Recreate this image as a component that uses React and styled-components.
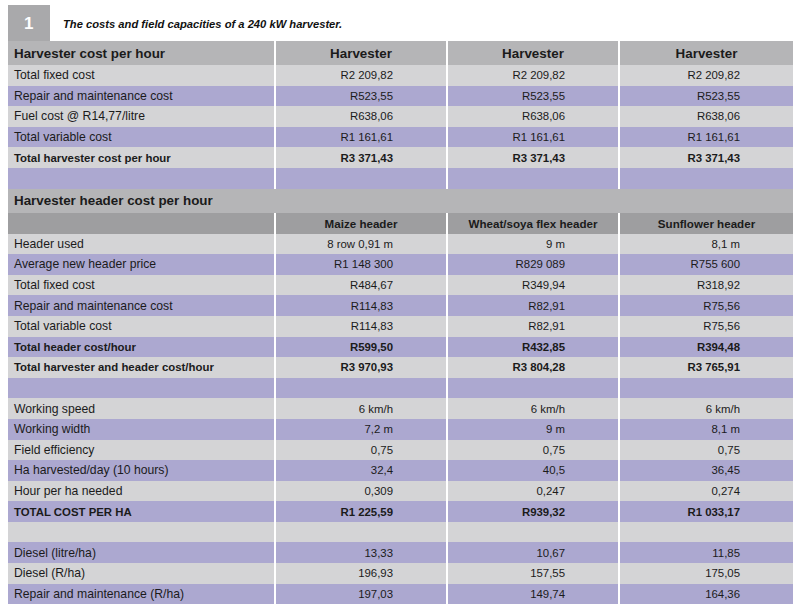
import React from "react"
import styled, { createGlobalStyle } from "styled-components"

const GlobalStyle = createGlobalStyle`
    body {
        margin: 0;
        background: #ffffff;
        font-family: "Liberation Sans", Arial, sans-serif;
        color: #1b1b1b;
    }
`

const harvesterRows = [
    { label: "Total fixed cost", values: ["R2 209,82", "R2 209,82", "R2 209,82"] },
    { label: "Repair and maintenance cost", values: ["R523,55", "R523,55", "R523,55"] },
    { label: "Fuel cost @ R14,77/litre", values: ["R638,06", "R638,06", "R638,06"] },
    { label: "Total variable cost", values: ["R1 161,61", "R1 161,61", "R1 161,61"] },
    { label: "Total harvester cost per hour", values: ["R3 371,43", "R3 371,43", "R3 371,43"], bold: true },
    { label: "", values: ["", "", ""] },
]

const headerRows = [
    { label: "Header used", values: ["8 row 0,91 m", "9 m", "8,1 m"] },
    { label: "Average new header price", values: ["R1 148 300", "R829 089", "R755 600"] },
    { label: "Total fixed cost", values: ["R484,67", "R349,94", "R318,92"] },
    { label: "Repair and maintenance cost", values: ["R114,83", "R82,91", "R75,56"] },
    { label: "Total variable cost", values: ["R114,83", "R82,91", "R75,56"] },
    { label: "Total header cost/hour", values: ["R599,50", "R432,85", "R394,48"], bold: true },
    { label: "Total harvester and header cost/hour", values: ["R3 970,93", "R3 804,28", "R3 765,91"], bold: true },
    { label: "", values: ["", "", ""] },
    { label: "Working speed", values: ["6 km/h", "6 km/h", "6 km/h"] },
    { label: "Working width", values: ["7,2 m", "9 m", "8,1 m"] },
    { label: "Field efficiency", values: ["0,75", "0,75", "0,75"] },
    { label: "Ha harvested/day (10 hours)", values: ["32,4", "40,5", "36,45"] },
    { label: "Hour per ha needed", values: ["0,309", "0,247", "0,274"] },
    { label: "TOTAL COST PER HA", values: ["R1 225,59", "R939,32", "R1 033,17"], bold: true },
    { label: "", values: ["", "", ""] },
    { label: "Diesel (litre/ha)", values: ["13,33", "10,67", "11,85"] },
    { label: "Diesel (R/ha)", values: ["196,93", "157,55", "175,05"] },
    { label: "Repair and maintenance (R/ha)", values: ["197,03", "149,74", "164,36"] },
]

function DataRow({ label, values, bold, tone }) {
    return (
        <Row>
            <LabelCell $tone={tone} $bold={bold}>{label}</LabelCell>
            {values.map((v, i) => (
                <ValueCell key={i} $tone={tone} $bold={bold}>{v}</ValueCell>
            ))}
        </Row>
    )
}

export default function App() {
    return (
        <>
            <GlobalStyle />
            <Page>
                <TitleBar>
                    <Badge>1</Badge>
                    <Caption>The costs and field capacities of a 240 kW harvester.</Caption>
                </TitleBar>
                <Table>
                    <Row>
                        <HeadCell>Harvester cost per hour</HeadCell>
                        <HeadCell $center>Harvester</HeadCell>
                        <HeadCell $center>Harvester</HeadCell>
                        <HeadCell $center>Harvester</HeadCell>
                    </Row>
                    {harvesterRows.map((r, i) => (
                        <DataRow key={i} {...r} tone={i % 2 === 0 ? "grey" : "purple"} />
                    ))}
                    <SectionHead>Harvester header cost per hour</SectionHead>
                    <Row>
                        <SubCell />
                        <SubCell>Maize header</SubCell>
                        <SubCell>Wheat/soya flex header</SubCell>
                        <SubCell>Sunflower header</SubCell>
                    </Row>
                    {headerRows.map((r, i) => (
                        <DataRow key={i} {...r} tone={i % 2 === 0 ? "grey" : "purple"} />
                    ))}
                </Table>
            </Page>
        </>
    )
}

const Page = styled.div`
    padding: 5px 7px 0 8px;
    width: 785px;
`
const TitleBar = styled.div`
    display: flex;
    align-items: center;
    height: 36px;
`
const Badge = styled.div`
    width: 42px;
    height: 36px;
    background: #a9a9ab;
    color: #ffffff;
    font-weight: bold;
    font-size: 17px;
    display: flex;
    align-items: center;
    padding-left: 16px;
    padding-top: 2px;
    box-sizing: border-box;
`
const Caption = styled.div`
    margin-left: 13px;
    font-size: 11.2px;
    font-weight: bold;
    font-style: italic;
    color: #111;
    padding-top: 2px;
`
const Table = styled.div`
    display: flex;
    flex-direction: column;
`
const Row = styled.div`
    display: grid;
    grid-template-columns: 266px 170px 170px 1fr;
    column-gap: 2px;
`
const HeadCell = styled.div`
    height: 24px;
    background: #b5b5b7;
    font-size: 13.4px;
    font-weight: bold;
    display: flex;
    align-items: center;
    justify-content: ${p => p.$center ? "center" : "flex-start"};
    padding-left: ${p => p.$center ? "0" : "6px"};
`
const SectionHead = styled.div`
    height: 24px;
    background: #b5b5b7;
    font-size: 13.4px;
    font-weight: bold;
    display: flex;
    align-items: center;
    padding-left: 6px;
`
const SubCell = styled.div`
    height: 21px;
    background: #9e9ea0;
    font-size: 11.6px;
    font-weight: bold;
    display: flex;
    align-items: center;
    justify-content: center;
`
const LabelCell = styled.div`
    height: 20.6px;
    background: ${p => p.$tone === "purple" ? "#aca8d0" : "#d4d4d6"};
    font-size: ${p => p.$bold ? "11.4px" : "12.2px"};
    font-weight: ${p => p.$bold ? "bold" : "normal"};
    display: flex;
    align-items: center;
    padding-left: 6px;
`
const ValueCell = styled(LabelCell)`
    justify-content: flex-end;
    padding-left: 0;
    padding-right: 53px;
    font-size: 11.4px;
`
